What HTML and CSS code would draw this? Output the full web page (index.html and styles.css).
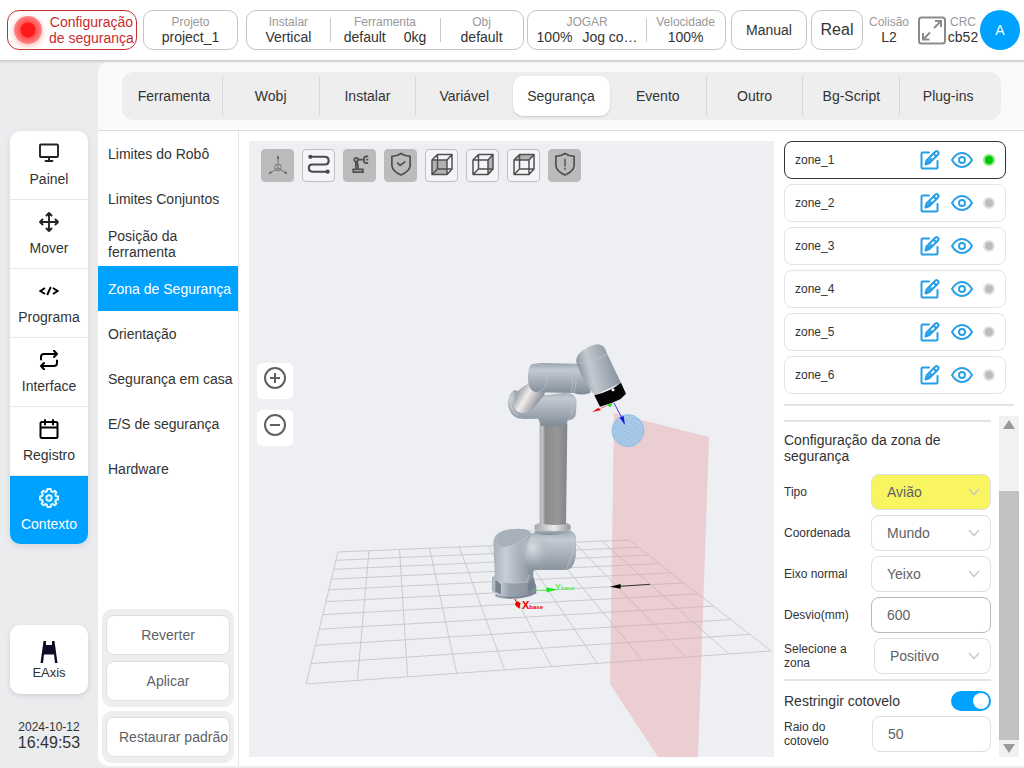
FILE: index.html
```html
<!DOCTYPE html>
<html lang="pt">
<head>
<meta charset="utf-8">
<meta name="viewport" content="width=device-width, initial-scale=1">
<title>Zona de Segurança</title>
<link rel="stylesheet" href="styles.css">
</head>
<body>
<svg class="defs" aria-hidden="true">
  <symbol id="i-edit" viewBox="0 0 20 20"><g fill="none" stroke="#249fe8" stroke-width="2" stroke-linejoin="round" stroke-linecap="round"><path d="M9 2.500H2.500Q1.500 2.500 1.500 3.500V17.500Q1.500 18.500 2.500 18.500H16.500Q17.500 18.500 17.500 17.500V11"/><path d="M5.500 14.500L6.500 10.500L15.500 1.500Q16.500.7 17.500 1.500L18.200 2.200Q19 3.200 18.200 4.200L9.500 13Z"/><path d="M13.500 3.500L16.300 6.200M6 14L11 9"/></g></symbol>
  <symbol id="i-eye" viewBox="0 0 22 16"><path d="M1 8Q5 1 11 1T21 8Q17 15 11 15T1 8Z" fill="none" stroke="#249fe8" stroke-width="2"/><circle cx="11" cy="8" r="3" fill="none" stroke="#249fe8" stroke-width="1.900"/></symbol>
  <symbol id="i-chev" viewBox="0 0 12 8"><path d="M1 1L6 6.500L11 1" fill="none" stroke="#c0c4cc" stroke-width="1.200"/></symbol>
  <symbol id="i-cube" viewBox="0 0 24 24"><path d="M2 7.500H17V22H2ZM2 7.500L7.500 2H22V16.500L17 22M17 7.500L22 2M7.500 2V16.500H22M7.500 16.500L2 22" fill="none" stroke="#505050" stroke-width="1.500" stroke-linejoin="round"/></symbol>
  <symbol id="i-shield" viewBox="0 0 24 26"><path d="M12 1.500Q8 4.300 2.500 4.500V14Q3 20 12 24Q21 20 21.500 14V4.500Q16 4.300 12 1.500Z" fill="none" stroke="#505050" stroke-width="1.800" stroke-linejoin="round"/></symbol>
</svg>

<header class="header">
  <div class="pill status"><span class="beacon"></span><span class="status-text">Configuração<br>de segurança</span></div>
  <div class="pill project"><div class="info"><small>Projeto</small><b>project_1</b></div></div>
  <div class="pill setup">
    <div class="info"><small>Instalar</small><b>Vertical</b></div>
    <div class="info"><small>Ferramenta</small><b class="pair"><span>default</span><span>0kg</span></b></div>
    <div class="info"><small>Obj</small><b>default</b></div>
  </div>
  <div class="pill jog">
    <div class="info jog-mode"><small>JOGAR</small><b class="jog-pair"><span>100%</span><span>Jog co…</span></b></div>
    <div class="info"><small>Velocidade</small><b>100%</b></div>
  </div>
  <button class="pill manual">Manual</button>
  <button class="pill real">Real</button>
  <div class="info collision"><small>Colisão</small><b>L2</b></div>
  <button class="expand" aria-label="Tela cheia"><svg viewBox="0 0 28 29"><g fill="none" stroke="#8b8b8b" stroke-width="2"><rect x="1" y="1.500" width="26" height="26" rx="2.500"/><path d="M17 5H23V11M23 5L16 12M5 17V23.500H11.500M5 23.500L12 16.500"/></g></svg></button>
  <div class="info crc"><small>CRC</small><b>cb52</b></div>
  <button class="avatar">A</button>
</header>

<div class="body">
  <aside class="sidebar">
    <nav class="nav">
      <a href="#painel"><svg viewBox="0 0 20 20"><path d="M2 1.500H18Q19 1.500 19 2.500V13Q19 14 18 14H2Q1 14 1 13V2.500Q1 1.500 2 1.500ZM10 14V18M6.500 18H13.500" fill="none" stroke="#222" stroke-width="1.900" stroke-linecap="round"/></svg>Painel</a>
      <a href="#mover"><svg viewBox="0 0 20 20"><path d="M10 1V19M1 10H19M7.500 3.500L10 1L12.500 3.500M7.500 16.500L10 19L12.500 16.500M3.500 7.500L1 10L3.500 12.500M16.500 7.500L19 10L16.500 12.500" fill="none" stroke="#222" stroke-width="1.900" stroke-linecap="round" stroke-linejoin="round"/></svg>Mover</a>
      <a href="#programa"><svg viewBox="0 0 20 20"><path d="M6 7L1.500 10L6 13M14 7L18.500 10L14 13M11.800 6L8.200 14" fill="none" stroke="#000" stroke-width="1.900"/></svg>Programa</a>
      <a href="#interface"><svg viewBox="0 0 20 20"><path d="M15 .8L18 4L15 7M18 4H5Q2 4 2 7V9.500M5 13L2 16L5 19.200M2 16H15Q18 16 18 13V10.500" fill="none" stroke="#000" stroke-width="2" stroke-linecap="round" stroke-linejoin="round"/></svg>Interface</a>
      <a href="#registro"><svg viewBox="0 0 20 20"><path d="M3 3H17Q18.500 3 18.500 4.500V17.500Q18.500 19 17 19H3Q1.500 19 1.500 17.500V4.500Q1.500 3 3 3ZM1.500 8.500H18.500M6 1V5.500M14 1V5.500" fill="none" stroke="#000" stroke-width="2" stroke-linecap="round"/></svg>Registro</a>
      <a href="#contexto" class="active"><svg viewBox="0 0 20 20"><path d="M8.300 1H11.700L12.200 3.300L13.700 4L15.700 2.800L17.400 4.500L16.200 6.500L16.800 8L19 8.400V11.600L16.800 12.100L16.200 13.600L17.400 15.500L15.600 17.300L13.700 16L12.200 16.700L11.700 19H8.300L7.800 16.700L6.300 16L4.400 17.300L2.600 15.500L3.800 13.600L3.200 12.100L1 11.600V8.400L3.200 8L3.800 6.500L2.600 4.500L4.400 2.800L6.300 4L7.800 3.300Z" fill="none" stroke="#e0f6ff" stroke-width="2" stroke-linejoin="round"/><circle cx="10" cy="10" r="2.700" fill="none" stroke="#e0f6ff" stroke-width="1.900"/></svg>Contexto</a>
    </nav>
    <a href="#eaxis" class="eaxis"><svg viewBox="0 0 18 22"><path d="M3.500 0H6V4H12V0H14.500L17.500 22H15L14 13.500H4L3 22H.5Z" fill="#0d0b26"/></svg>EAxis</a>
    <div class="clock"><time class="date">2024-10-12</time><time class="time">16:49:53</time></div>
  </aside>

  <main class="main">
    <div class="tabbar"><nav class="tabs">
      <a href="#ferramenta">Ferramenta</a><a href="#wobj">Wobj</a><a href="#instalar">Instalar</a><a href="#variavel">Variável</a><a href="#seguranca" class="active">Segurança</a><a href="#evento">Evento</a><a href="#outro">Outro</a><a href="#bgscript">Bg-Script</a><a href="#plugins">Plug-ins</a>
    </nav></div>
    <div class="content">
      <div class="menu">
        <nav class="menu-list">
          <a href="#m1">Limites do Robô</a><a href="#m2">Limites Conjuntos</a><a href="#m3">Posição da ferramenta</a><a href="#m4" class="active">Zona de Segurança</a><a href="#m5">Orientação</a><a href="#m6">Segurança em casa</a><a href="#m7">E/S de segurança</a><a href="#m8">Hardware</a>
        </nav>
        <div class="actions">
          <div class="action-group"><button>Reverter</button><button>Aplicar</button></div>
          <div class="action-group"><button class="restore">Restaurar padrão</button></div>
        </div>
      </div>

      <section class="stage">
        <svg class="scene" viewBox="249 141 525 616" preserveAspectRatio="xMidYMid slice" role="img" aria-label="Robô em 3D">
          <defs>
            <linearGradient id="gv" x2="0" y2="1"><stop offset="0" stop-color="#99a2ad"/><stop offset=".22" stop-color="#c2cad2"/><stop offset=".6" stop-color="#a3acb6"/><stop offset="1" stop-color="#808a96"/></linearGradient>
            <linearGradient id="gh"><stop offset="0" stop-color="#a7b0ba"/><stop offset=".15" stop-color="#c7ced6"/><stop offset=".4" stop-color="#98a1ac"/><stop offset="1" stop-color="#858e9a"/></linearGradient>
            <linearGradient id="gtube"><stop offset="0" stop-color="#a5a7a9"/><stop offset=".1" stop-color="#c5c6c7"/><stop offset=".2" stop-color="#8b8c8d"/><stop offset=".65" stop-color="#979797"/><stop offset="1" stop-color="#838485"/></linearGradient>
            <linearGradient id="gring"><stop offset="0" stop-color="#a5a7aa"/><stop offset=".55" stop-color="#eeeceb"/><stop offset="1" stop-color="#929598"/></linearGradient>
            <linearGradient id="glink" x1="0" y1=".2" x2="1" y2=".8"><stop offset=".1" stop-color="#929599"/><stop offset=".42" stop-color="#f0eeec"/><stop offset=".8" stop-color="#8d9095"/></linearGradient>
            <linearGradient id="gwrist" x1="0" y1=".55" x2="1" y2=".25"><stop offset="0" stop-color="#818b96"/><stop offset=".3" stop-color="#c2cad1"/><stop offset=".55" stop-color="#a9b2bb"/><stop offset="1" stop-color="#7c8691"/></linearGradient>
            <radialGradient id="glow"><stop offset="0" stop-color="#d8dee3"/><stop offset="1" stop-color="#aab3bd" stop-opacity="0"/></radialGradient>
            <pattern id="dots" width="9" height="9" patternUnits="userSpaceOnUse" patternTransform="rotate(25)"><rect width="9" height="9" fill="#8fbfe6"/><circle cx="2.500" cy="2.500" r="2.200" fill="#e3e0e8"/><circle cx="7" cy="6.500" r="1.700" fill="#d3d8e3"/></pattern>
          </defs>
          <path id="floor" class="floor"/>
          <path d="M614 413L709 437L698 757H658L610 684Z" fill="#e7a0a3" fill-opacity=".42"/>
          <g transform="translate(470 330) scale(.3333)">
            <path d="M66 741L78 735V690H190V742L199 770V790Q175 806 125 807Q90 807 76 801L78 792L66 782Z" fill="url(#gh)"/>
            <path d="M76 796Q110 807 155 801L198 788" fill="none" stroke="#727d8a" stroke-width="3"/>
            <path d="M76 744L93 764V793L76 785ZM172 764L190 742L197 769L176 792Z" fill="#778290"/>
            <path d="M70 638Q72 600 130 597Q178 594 184 612Q235 590 300 602Q319 610 318 628L316 684Q310 718 288 719H205Q184 719 177 734L172 756Q120 765 75 750Z" fill="url(#gh)"/>
            <path d="M184 615Q235 590 300 602Q319 610 318 628L316 684Q310 718 288 719H205Q184 719 177 734Q154 680 184 615Z" fill="url(#gv)"/>
            <ellipse cx="188" cy="654" rx="52" ry="62" fill="url(#glow)"/>
            <path d="M78 625Q80 604 125 598Q190 594 178 614Q155 642 104 652Q82 652 78 625Z" fill="#a8b1ba"/>
            <path d="M104 652Q155 642 178 614M302 604Q325 650 288 719M177 734L172 756Q120 765 75 750" fill="none" stroke="#c3cbd2" stroke-width="2"/>
            <path d="M194 589V610Q240 622 302 606V589Z" fill="url(#gv)"/>
            <path d="M194 585L210 578H289L301 585V598Q250 609 194 596Z" fill="url(#gring)"/>
            <path d="M209 282H292L288 582Q245 590 209 579Z" fill="url(#gtube)"/>
            <path d="M132 181Q104 207 118 240Q129 268 165 267L205 266L212 287Q250 293 291 286L292 272Q318 270 318 247L320 217Q321 190 286 188L230 195Z" fill="url(#gv)"/>
            <path d="M136 195Q147 174 180 158L222 180Q230 190 215 204L186 240Q177 252 151 248Q120 238 136 195Z" fill="url(#glink)"/>
            <path d="M130 185Q105 227 144 258" fill="none" stroke="#cbd1d7" stroke-width="3"/>
            <path d="M185 103L210 99L322 101Q350 110 359 150L362 188Q335 199 312 189L200 187Q174 184 174 145Q173 112 185 103Z" fill="url(#gv)"/>
            <path d="M207 101Q230 108 231 143Q230 183 202 187M303 102Q314 145 304 188M312 102Q325 145 312 189M286 188Q310 200 305 260L292 272" fill="none" stroke="#bdc5cd" stroke-width="2"/>
            <path d="M319 95Q316 79 336 63Q365 43 384 43Q405 45 409 66L453 158L374 196Q337 153 319 95Z" fill="url(#gwrist)"/>
            <path d="M328 99Q365 101 412 72" fill="none" stroke="#c3cad1" stroke-width="2"/>
            <path d="M373 196Q420 185 453 158L468 191L452 207Q424 222 390 230Z" fill="#050505"/>
            <circle cx="429" cy="179" r="4.500" fill="#fff"/>
            <path d="M392 235L408 228" stroke="#ff2020" stroke-width="2"/><path d="M366 246L386 233L393 241Z" fill="#f20a0a"/><path d="M408 225L428 219L422 231Z" fill="#29d629"/>
            <circle cx="474" cy="302" r="48" fill="url(#dots)" stroke="#8fbfe6" stroke-width="3"/>
            <path d="M432 219L456 264" stroke="#3535e0" stroke-width="3"/><path d="M449 263L461 258L465 285Z" fill="#1616e3"/>
            <path d="M198 781H235" stroke="#5ded4c" stroke-width="3"/><path d="M229 772L262 779L230 787Z" fill="#1ae719"/>
            <path d="M134 807L141 819" stroke="#f00" stroke-width="3"/><path d="M135 820L143 814L151 819L149 836L137 827Z" fill="#f20000"/>
            <path d="M450 769L540 763" stroke="#333" stroke-width="3"/><path d="M420 770L452 762V776Z"/>
          </g>
          <text x="522" y="609" class="axis-x">X<tspan class="axis-sub">base</tspan></text>
          <text x="555" y="590" class="axis-y">Y<tspan class="axis-sub">base</tspan></text>
        </svg>
        <div class="tools">
          <button class="on" aria-label="Eixos"><svg viewBox="0 0 24 26"><g fill="none" stroke="#777" stroke-width="1"><path d="M12 4V12M12 17L3 22M12 17L21 22"/><circle cx="12" cy="16" r="3.500"/><path d="M12 12V16L9 19M12 16L15 19"/></g><path d="M12 3L10.800 7H13.200ZM2 22.500L4.500 20L5.500 22ZM22 22.500L19.500 20L18.500 22Z" fill="#555"/></svg></button>
          <button aria-label="Trajetória"><svg viewBox="0 0 24 26"><path d="M3 5H18Q22 5 22 9Q22 13 18 13H5Q1.500 13 1.500 16.500Q1.500 20.500 5 20.500H20" fill="none" stroke="#4a4a4a" stroke-width="2.200"/><circle cx="3" cy="5" r="2.200" fill="#4a4a4a"/><circle cx="21" cy="20.500" r="2.200" fill="#4a4a4a"/></svg></button>
          <button class="on" aria-label="Robô"><svg viewBox="0 0 24 26"><path d="M5 21V18H15V21ZM8 18L7.500 10M10.500 18L9 10M10 8H15M20.500 4.500H18.500Q16 4.500 16 8T18.500 11.500H20.500M18.500 8H20.500" fill="none" stroke="#4f4f4f" stroke-width="1.800"/><circle cx="8" cy="8" r="2" fill="none" stroke="#4f4f4f" stroke-width="1.800"/></svg></button>
          <button class="on" aria-label="Proteção"><svg viewBox="0 0 24 26"><use href="#i-shield"/><path d="M8 11L11 14L16.500 10" fill="none" stroke="#505050" stroke-width="1.800"/></svg></button>
          <button aria-label="Vista frontal"><svg viewBox="0 0 24 24"><path d="M2 7.500H17V22H2Z" fill="#b2b2b4"/><use href="#i-cube"/></svg></button>
          <button aria-label="Vista lateral"><svg viewBox="0 0 24 24"><path d="M17 7.500L22 2V16.500L17 22Z" fill="#b2b2b4"/><use href="#i-cube"/></svg></button>
          <button aria-label="Vista superior"><svg viewBox="0 0 24 24"><path d="M2 7.500L7.500 2H22L17 7.500Z" fill="#b2b2b4"/><use href="#i-cube"/></svg></button>
          <button class="on" aria-label="Alerta"><svg viewBox="0 0 24 26"><use href="#i-shield"/><path d="M12 7V15M12 16.500V18.500" stroke="#505050" stroke-width="1.500"/></svg></button>
        </div>
        <div class="zoom">
          <button aria-label="Aproximar"><svg viewBox="0 0 22 22"><path d="M11 6V16M6 11H16" stroke="#606060" stroke-width="2"/><circle cx="11" cy="11" r="10" fill="none" stroke="#606060" stroke-width="2"/></svg></button>
          <button aria-label="Afastar"><svg viewBox="0 0 22 22"><path d="M6 11H16" stroke="#606060" stroke-width="2"/><circle cx="11" cy="11" r="10" fill="none" stroke="#606060" stroke-width="2"/></svg></button>
        </div>
      </section>

      <aside class="panel">
        <ul class="zones">
          <li class="selected"><span class="zname">zone_1</span><button aria-label="Editar zone_1"><svg class="edit"><use href="#i-edit"/></svg></button><button aria-label="Mostrar zone_1"><svg class="eye"><use href="#i-eye"/></svg></button><i class="dot"></i></li>
          <li><span class="zname">zone_2</span><button aria-label="Editar zone_2"><svg class="edit"><use href="#i-edit"/></svg></button><button aria-label="Mostrar zone_2"><svg class="eye"><use href="#i-eye"/></svg></button><i class="dot"></i></li>
          <li><span class="zname">zone_3</span><button aria-label="Editar zone_3"><svg class="edit"><use href="#i-edit"/></svg></button><button aria-label="Mostrar zone_3"><svg class="eye"><use href="#i-eye"/></svg></button><i class="dot"></i></li>
          <li><span class="zname">zone_4</span><button aria-label="Editar zone_4"><svg class="edit"><use href="#i-edit"/></svg></button><button aria-label="Mostrar zone_4"><svg class="eye"><use href="#i-eye"/></svg></button><i class="dot"></i></li>
          <li><span class="zname">zone_5</span><button aria-label="Editar zone_5"><svg class="edit"><use href="#i-edit"/></svg></button><button aria-label="Mostrar zone_5"><svg class="eye"><use href="#i-eye"/></svg></button><i class="dot"></i></li>
          <li><span class="zname">zone_6</span><button aria-label="Editar zone_6"><svg class="edit"><use href="#i-edit"/></svg></button><button aria-label="Mostrar zone_6"><svg class="eye"><use href="#i-eye"/></svg></button><i class="dot"></i></li>
        </ul>
        <hr class="rule">
        <div class="settings">
          <form class="form">
            <hr class="rule">
            <h2>Configuração da zona de segurança</h2>
            <div class="fields">
              <div class="field"><label for="tipo">Tipo</label><span class="select yellow"><select id="tipo"><option>Avião</option></select><svg><use href="#i-chev"/></svg></span></div>
              <div class="field"><label for="coord">Coordenada</label><span class="select"><select id="coord"><option>Mundo</option></select><svg><use href="#i-chev"/></svg></span></div>
              <div class="field"><label for="eixo">Eixo normal</label><span class="select"><select id="eixo"><option>Yeixo</option></select><svg><use href="#i-chev"/></svg></span></div>
              <div class="field"><label for="desvio">Desvio(mm)</label><input class="dark" id="desvio" type="text" value="600"></div>
              <div class="field side"><label for="lado">Selecione a zona</label><span class="select"><select id="lado"><option>Positivo</option></select><svg><use href="#i-chev"/></svg></span></div>
            </div>
            <hr class="rule">
            <div class="toggle"><label for="cot">Restringir cotovelo</label><input id="cot" type="checkbox" role="switch" checked></div>
            <div class="field radius"><label for="raio">Raio do cotovelo</label><input id="raio" type="text" value="50"></div>
          </form>
          <div class="scroll" aria-hidden="true"><svg viewBox="0 0 20 17"><path d="M4 13L10 4L16 13Z"/></svg><div class="track"><div class="thumb"></div></div><svg viewBox="0 0 20 17"><path d="M4 4L10 13L16 4Z"/></svg></div>
        </div>
      </aside>
    </div>
  </main>
</div>
<script src="floor.js"></script>
</body>
</html>
```
FILE: styles.css
```css
* { box-sizing: border-box; }
body { margin: 0; min-height: 100vh; display: flex; flex-direction: column; background: #ebecee; color: #333; font: 14px/16px "Liberation Sans", Arial, sans-serif; }
button, input, select { font: inherit; color: inherit; margin: 0; }
button { cursor: pointer; padding: 0; }
a { color: inherit; text-decoration: none; }
.defs { position: absolute; width: 0; height: 0; }

.header { position: relative; display: flex; align-items: center; height: 60px; padding: 0 4px 0 7px; background: #fff; box-shadow: 0 1px 3px #bbb; }
.pill { display: flex; align-items: center; justify-content: center; height: 40px; border: 1px solid #c4c4c4; border-radius: 10px; background: #fff; }
.status { flex: 130 1 130px; justify-content: flex-start; gap: 7px; padding-left: 6px; border-color: #c03030; border-radius: 12px; color: #c92c2c; text-align: center; white-space: nowrap; min-width: 0; }
.beacon { flex: none; width: 28px; height: 28px; border-radius: 50%; background: radial-gradient(circle, #ff1a1a 0 7px, #ff5454 8px, #ff8585 14px); box-shadow: 0 2px 6px #ffb5b5; }
.project { flex: 95 1 95px; margin-left: 6px; }
.setup { flex: 278 1 278px; margin-left: 8px; }
.jog { flex: 199 1 199px; margin-left: 3px; }
.manual { flex: 76 1 76px; margin-left: 5px; }
.real { flex: 52 1 52px; margin-left: 4px; font-size: 16px; }
.info { text-align: center; white-space: nowrap; }
.info small { display: block; font-size: 12px; line-height: 14px; color: #999; }
.info b { display: block; font-weight: normal; line-height: 16px; }
.setup .info, .jog .info { flex: 1; }
.setup .info:first-child { flex: 0 0 30%; }
.setup .info:nth-child(2) { flex: 0 0 40%; }
.setup .info + .info, .jog .info + .info { background: linear-gradient(#c8c8c8, #c8c8c8) left center / 1px 24px no-repeat; }
.jog .jog-mode { flex: 0 0 60%; }
.info .pair { display: flex; justify-content: center; gap: 18px; }
.info .jog-pair { display: flex; justify-content: center; gap: 10px; }
.collision { width: 52px; }
.expand { width: 28px; height: 29px; margin-left: 3px; border: 0; background: none; }
.expand svg { display: block; width: 28px; height: 29px; }
.crc { width: 34px; }
.avatar { width: 40px; height: 40px; border: 0; border-radius: 50%; background: #00a2ff; color: #fff; }

.body { flex: 1; display: flex; padding: 2px 0; }
.sidebar { width: 98px; padding: 69px 10px 14px; display: flex; flex-direction: column; }
.nav { border-radius: 10px; overflow: hidden; background: #fff; box-shadow: 0 2px 6px #d3d5d8; }
.nav a { display: flex; flex-direction: column; align-items: center; gap: 8px; height: 69px; padding-top: 12px; border-bottom: 1px solid #e8e8e8; }
.nav a.active { height: 68px; border: 0; background: #00a2ff; color: #fff; }
.nav svg { width: 20px; height: 20px; }
.eaxis { display: flex; flex-direction: column; align-items: center; height: 69px; margin-top: auto; padding-top: 16px; border-radius: 10px; background: #fff; box-shadow: 0 2px 5px #cfd1d4; font-size: 13px; }
.eaxis svg { width: 18px; height: 22px; margin-bottom: 2px; }
.clock { display: flex; flex-direction: column; align-items: center; padding-top: 26px; }
.date { font-size: 12px; line-height: 14px; }
.time { font-size: 16px; line-height: 18px; }

.main { flex: 1; min-width: 0; display: flex; flex-direction: column; border-radius: 10px 0 0 10px; overflow: hidden; background: #fff; }
.tabbar { padding: 10px 23px 10px 24px; background: #fafafa; border-bottom: 1px solid #dcdcdc; }
.tabs { display: flex; padding: 4px; border-radius: 12px; background: #eee; }
.tabs a { flex: 1; height: 40px; line-height: 40px; text-align: center; border-right: 1px solid #d8d8d8; }
.tabs a:nth-child(4), .tabs a:last-child { border-color: transparent; }
.tabs a.active { border-color: transparent; border-radius: 10px; background: #fff; box-shadow: 0 1px 2px #c8c8c8; }

.content { flex: 1; display: flex; }
.menu { width: 141px; display: flex; flex-direction: column; justify-content: space-between; border-right: 1px solid #e6e6e6; }
.menu-list a { display: flex; align-items: center; height: 45px; padding-left: 10px; }
.menu-list a.active { background: #00a2ff; color: #fff; }
.actions { display: flex; flex-direction: column; gap: 4px; padding: 0 4px 3px; }
.action-group { display: flex; flex-direction: column; gap: 6px; padding: 6px 4px; border-radius: 10px; background: #eee; }
.action-group button { height: 40px; border: 1px solid #dcdfe6; border-radius: 8px; background: #fff; color: #606266; white-space: nowrap; }
.action-group .restore { padding-left: 12px; text-align: left; }

.stage { position: relative; flex: 1; min-width: 0; margin: 10px 0 9px 10px; background: #eeeff3; }
.scene { position: absolute; inset: 0; width: 100%; height: 100%; }
.floor { fill: none; stroke: #c9cbce; stroke-width: 1; }
.axis-x, .axis-y { font-size: 11px; font-weight: bold; fill: #f00000; }
.axis-y { font-size: 9px; fill: #5cec48; }
.axis-sub { font-size: 6px; }
.tools { position: absolute; top: 8px; left: 12px; display: flex; gap: 8px; }
.tools button { display: flex; justify-content: center; padding-top: 2px; width: 33px; height: 33px; border: 1px solid #c0c0c0; border-radius: 4px; background: #f4f5f8; }
.tools button.on { background: #bbb; border-color: #bbb; }
.tools svg { width: 24px; height: 25px; }
.zoom { position: absolute; top: 222px; left: 8px; display: flex; flex-direction: column; gap: 11px; }
.zoom button { display: flex; justify-content: center; padding-top: 4px; width: 36px; height: 36px; border: 0; border-radius: 5px; background: #fff; }
.zoom svg { width: 22px; height: 22px; }

.panel { width: 250px; display: flex; flex-direction: column; padding: 10px 0 9px 10px; }
.zones { display: flex; flex-direction: column; gap: 5px; width: 222px; margin: 0; padding: 0; list-style: none; }
.zones li { display: flex; align-items: center; height: 38px; padding: 0 10px; border: 1px solid #e2e4e8; border-radius: 8px; font-size: 12px; }
.zones li.selected { border-color: #333; }
.zname { flex: 1; }
.zones button { display: flex; border: 0; background: none; }
.edit { width: 20px; height: 20px; margin-right: 11px; }
.eye { width: 22px; height: 16px; margin-right: 10px; }
.dot { width: 12px; height: 12px; border: 2px solid #e2e2e2; border-radius: 50%; background: #bdbdbd; }
.selected .dot { border-color: #86e586; background: #00c800; }
.rule { height: 2px; margin: 0; border: 0; background: #e2e3e8; }
.panel > .rule { margin: 10px 10px 10px 0; }
.settings { flex: 1; display: flex; justify-content: space-between; padding-right: 5px; }
.form { width: 207px; padding-top: 4px; }
.form h2 { margin: 10px 0; font-size: 14px; font-weight: normal; line-height: 16px; }
.fields { display: flex; flex-direction: column; gap: 5px; margin-bottom: 5px; }
.field { display: grid; grid-template-columns: 87px 1fr; align-items: center; height: 36px; }
.side { grid-template-columns: 90px 1fr; }
.radius { grid-template-columns: 88px 1fr; }
.field label { font-size: 12px; line-height: 14px; padding-right: 12px; }
.field input, .select select { width: 100%; height: 36px; padding: 0 15px; border: 1px solid #dcdfe6; border-radius: 8px; background: #fff; color: #606266; appearance: none; }
.field input.dark { border-color: #b8bac0; }
.select { position: relative; display: block; }
.select.yellow select { background: #f9f560; }
.select svg { position: absolute; right: 11px; top: 14px; width: 12px; height: 8px; pointer-events: none; }
.toggle { display: flex; align-items: center; justify-content: space-between; margin: 10px 0 5px; }
.toggle input { display: flex; justify-content: flex-end; width: 40px; height: 20px; margin: 0; padding: 2px; border-radius: 10px; background: #00a2ff; appearance: none; }
.toggle input::before { content: ""; width: 16px; height: 16px; border-radius: 50%; background: #fff; }
.scroll { display: flex; flex-direction: column; width: 20px; background: #f1f1f1; }
.scroll svg { width: 20px; height: 17px; fill: #999; }
.track { flex: 1; display: flex; flex-direction: column; justify-content: flex-end; }
.thumb { height: 81%; background: #c1c1c1; }
```
FILE: floor.js
```js
// Perspective floor: maps a 10 x 10 unit grid onto the quad's corners.
const [a, b, c, d] = [[306, 684], [771, 651], [629, 540], [338, 552]];
const sx = a[0] - b[0] + c[0] - d[0], sy = a[1] - b[1] + c[1] - d[1];
const x1 = b[0] - c[0], x2 = d[0] - c[0], y1 = b[1] - c[1], y2 = d[1] - c[1];
const det = x1 * y2 - x2 * y1;
const g = (sx * y2 - x2 * sy) / det, h = (x1 * sy - sx * y1) / det;
const point = (u, v) => {
  const w = g * u + h * v + 1;
  return [0, 1].map(i => ((b[i] - a[i] + g * b[i]) * u + (d[i] - a[i] + h * d[i]) * v + a[i]) / w).map(n => n.toFixed(1)).join(" ");
};
let path = "";
for (let i = 0; i <= 10; i++) {
  const t = i / 10;
  path += `M${point(t, 0)}L${point(t, 1)}M${point(0, t)}L${point(1, t)}`;
}
document.getElementById("floor").setAttribute("d", path);
```
